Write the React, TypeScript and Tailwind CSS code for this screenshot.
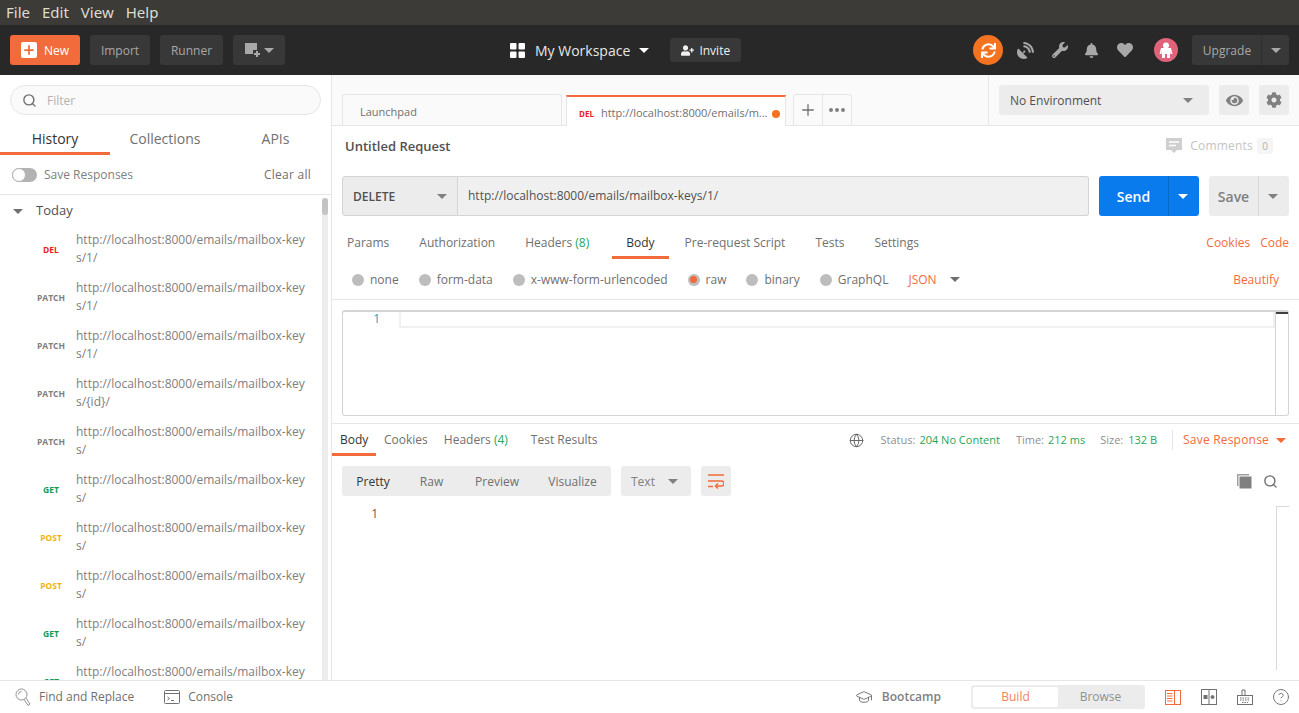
import { Search, Plus, Globe, HelpCircle, GraduationCap } from 'lucide-react';
import { FaBell, FaCog, FaEye, FaHeart, FaSatelliteDish, FaSync, FaUserPlus, FaWrench } from 'react-icons/fa';

const HISTORY = [
  { method: 'DEL', color: 'text-[#f02020]', url: 'http://localhost:8000/emails/mailbox-keys/1/' },
  { method: 'PATCH', color: 'text-[#808080]', url: 'http://localhost:8000/emails/mailbox-keys/1/' },
  { method: 'PATCH', color: 'text-[#808080]', url: 'http://localhost:8000/emails/mailbox-keys/1/' },
  { method: 'PATCH', color: 'text-[#808080]', url: 'http://localhost:8000/emails/mailbox-keys/{id}/' },
  { method: 'PATCH', color: 'text-[#808080]', url: 'http://localhost:8000/emails/mailbox-keys/' },
  { method: 'GET', color: 'text-[#0f9d58]', url: 'http://localhost:8000/emails/mailbox-keys/' },
  { method: 'POST', color: 'text-[#f5b014]', url: 'http://localhost:8000/emails/mailbox-keys/' },
  { method: 'POST', color: 'text-[#f5b014]', url: 'http://localhost:8000/emails/mailbox-keys/' },
  { method: 'GET', color: 'text-[#0f9d58]', url: 'http://localhost:8000/emails/mailbox-keys/' },
  { method: 'GET', color: 'text-[#0f9d58]', url: 'http://localhost:8000/emails/mailbox-keys/' },
];

function Caret({ className }: { className: string }) {
  return <span className={`inline-block w-0 h-0 border-x-[5px] border-x-transparent border-t-[5px] ${className}`} />;
}

function Radio({ label, on }: { label: string; on?: boolean }) {
  return (
    <div className="flex items-center gap-[6px]">
      <span className="w-3 h-3 rounded-full bg-[#bdbdbd] flex items-center justify-center">
        {on && <span className="w-[7px] h-[7px] rounded-full bg-[#f26b3a]" />}
      </span>
      <span className="text-xs text-[#6f6f6f]">{label}</span>
    </div>
  );
}

function TopBar() {
  return (
    <div className="h-[50px] bg-[#282828] flex items-center px-[10px] shrink-0">
      <div className="flex items-center gap-[10px] w-[450px]">
        <button className="w-[70px] h-[30px] rounded-[3px] bg-[#f26b3a] text-white text-xs flex items-center pl-[11px] gap-[7px]">
          <span className="w-4 h-4 bg-white rounded-[2px] flex items-center justify-center">
            <Plus size={14} strokeWidth={3} className="text-[#f26b3a]" />
          </span>
          <span className="pt-px">New</span>
        </button>
        <button className="w-[60px] h-[30px] pt-px rounded-[3px] bg-[#383838] text-[#a8a8a8] text-xs">Import</button>
        <button className="w-[63px] h-[30px] pt-px rounded-[3px] bg-[#383838] text-[#a8a8a8] text-xs">Runner</button>
        <button className="w-[52px] h-[30px] rounded-[3px] bg-[#383838] flex items-center justify-center gap-[3px]">
          <svg width="16" height="16" viewBox="0 0 16 16">
            <path d="M0 1h12v7H8v4H0z" fill="#a8a8a8" />
            <path d="M9 12h6M12 9v6" stroke="#a8a8a8" strokeWidth="2" />
          </svg>
          <Caret className="border-t-[#a8a8a8]" />
        </button>
      </div>
      <div className="flex items-center ml-[50px]">
        <svg width="15" height="15" viewBox="0 0 15 15" fill="#fff">
          <rect width="6.500" height="6.500" rx="1" />
          <rect x="8.500" width="6.500" height="6.500" rx="1" />
          <rect y="8.500" width="6.500" height="6.500" rx="1" />
          <rect x="8.500" y="8.500" width="6.500" height="6.500" rx="1" />
        </svg>
        <span className="text-sm text-[#e6e6e6] ml-[10px] pt-[2px]">My Workspace</span>
        <Caret className="border-t-white ml-[9px]" />
        <button className="ml-[21px] w-[71px] h-6 rounded-[3px] bg-[#383838] text-[#f0f0f0] text-xs flex items-center justify-center gap-[5px]">
          <FaUserPlus size={13} className="text-[#f0f0f0]" />
          <span className="pt-px">Invite</span>
        </button>
      </div>
      <div className="ml-auto flex items-center">
        <span className="w-[30px] h-[30px] rounded-full bg-[#f47321] flex items-center justify-center">
          <FaSync size={15} className="text-white" />
        </span>
        <FaSatelliteDish size={17} className="text-[#a8a8a8] ml-[14px]" />
        <FaWrench size={16} className="text-[#a8a8a8] ml-[18px]" />
        <FaBell size={15} className="text-[#a8a8a8] ml-[16px]" />
        <FaHeart size={16} className="text-[#a8a8a8] ml-[18px]" />
        <span className="w-6 h-6 rounded-full bg-[#e0637b] ml-[21px] flex items-center justify-center">
          <svg width="14" height="16" viewBox="0 0 14 16" fill="#fff">
            <circle cx="7" cy="3.500" r="3" />
            <path d="M2 6h10l1.500 6h-2L11 9v7H8v-4H6v4H3V9l-.5 3h-2z" />
          </svg>
        </span>
        <div className="ml-[14px] w-[97px] h-[30px] rounded-[3px] bg-[#383838] flex items-center">
          <span className="w-[70px] pl-px text-center text-xs text-[#a8a8a8] border-r border-[#303030] leading-[31px] h-[30px]">Upgrade</span>
          <Caret className="border-t-[#a8a8a8] ml-[9px]" />
        </div>
      </div>
    </div>
  );
}

function Sidebar() {
  return (
    <aside className="w-[332px] shrink-0 border-r border-[#e6e6e6] flex flex-col min-h-0">
      <div className="px-[10px] pt-[10px]">
        <div className="h-[30px] rounded-full border border-[#e6e6e6] bg-[#fafafa] flex items-center pl-[11px] gap-[10px] w-[311px]">
          <Search size={15} strokeWidth={2.25} className="text-[#707070]" />
          <span className="text-xs text-[#b3b3b3] pt-[2px]">Filter</span>
        </div>
      </div>
      <div className="flex mt-[10px] h-[30px] w-[330px]">
        <div className="w-[110px] text-center text-sm text-[#333] border-b-[3px] border-[#f26b3a] leading-[28px]">History</div>
        <div className="w-[110px] text-center text-sm text-[#707070] leading-[28px]">Collections</div>
        <div className="w-[110px] pl-px text-center text-sm text-[#707070] leading-[28px]">APIs</div>
      </div>
      <div className="h-[40px] flex items-center pl-3 pr-5 border-b border-[#e6e6e6] shrink-0">
        <span className="w-[25px] h-[14px] rounded-full bg-[#b3b3b3] relative">
          <span className="absolute left-0 top-0 w-[14px] h-[14px] rounded-full bg-white border border-[#b3b3b3]" />
        </span>
        <span className="text-xs text-[#808080] ml-[7px]">Save Responses</span>
        <span className="text-xs text-[#707070] ml-auto tracking-[0.25px]">Clear all</span>
      </div>
      <div className="flex-1 flex min-h-0 overflow-hidden">
        <div className="w-[322px] shrink-0">
          <div className="flex items-center h-[30px] pt-[2px] pl-[13px]">
            <Caret className="border-t-[#707070]" />
            <span className="text-[13px] text-[#505050] ml-[13px]">Today</span>
          </div>
          {HISTORY.map((item, i) => (
            <div key={i} className="h-[48px] flex items-center">
              <span className={`ml-[31px] w-[40px] pt-[2px] text-center text-[8.5px] font-bold shrink-0 ${item.color}`}>{item.method}</span>
              <span className="ml-[5px] w-[232px] text-xs leading-[18px] text-[#808080] break-all">{item.url}</span>
            </div>
          ))}
        </div>
        <div className="w-[6px] bg-[#ececec] rounded-full mt-[3px] h-full">
          <div className="h-[17px] rounded-full bg-[#c4c4c4]" />
        </div>
      </div>
    </aside>
  );
}

function TabStrip() {
  return (
    <div className="h-[51px] bg-[#fafafa] border-b border-[#e6e6e6] flex shrink-0">
      <div className="flex items-end pl-[10px] flex-1">
        <div className="w-[220px] h-[31px] pt-1 border border-b-0 border-[#e6e6e6] rounded-t-[3px] flex items-center pl-[17px] text-[11px] text-[#707070]">
          Launchpad
        </div>
        <div className="w-[220px] h-[31px] pt-1 ml-[4px] bg-white border-x border-[#e6e6e6] border-t-[2px] border-t-[#f26b3a] flex items-center pl-[12px] -mb-px">
          <span className="text-[8px] font-bold text-[#f02020]">DEL</span>
          <span className="text-[11px] text-[#707070] ml-[7px]">http://localhost:8000/emails/m...</span>
          <span className="w-2 h-2 rounded-full bg-[#f47321] ml-[4px]" />
        </div>
        <div className="flex h-[31px] ml-[7px] border border-b-0 border-[#e6e6e6] rounded-t-[3px]">
          <span className="w-[29px] flex items-center justify-center border-r border-[#e6e6e6]">
            <Plus size={18} strokeWidth={1.75} className="text-[#707070]" />
          </span>
          <span className="w-[28px] flex items-center justify-center gap-[2px]">
            <span className="w-1 h-1 rounded-full bg-[#808080]" />
            <span className="w-1 h-1 rounded-full bg-[#808080]" />
            <span className="w-1 h-1 rounded-full bg-[#808080]" />
          </span>
        </div>
      </div>
      <div className="w-[311px] border-l border-[#e6e6e6] flex items-start pt-[10px] pl-[10px] gap-[10px]">
        <div className="w-[210px] h-[30px] rounded-[3px] bg-[#ececec] flex items-center justify-between pl-[11px] pr-4 text-xs text-[#505050]">
          <span className="pt-px">No Environment</span>
          <Caret className="border-t-[#808080]" />
        </div>
        <span className="w-[30px] h-[30px] rounded-[3px] bg-[#ececec] flex items-center justify-center">
          <FaEye size={17} className="text-[#808080]" />
        </span>
        <span className="w-[30px] h-[30px] rounded-[3px] bg-[#ececec] flex items-center justify-center">
          <FaCog size={16} className="text-[#808080]" />
        </span>
      </div>
    </div>
  );
}

function RequestPane() {
  return (
    <div className="h-[298px] shrink-0 border-b border-[#e6e6e6] flex flex-col">
      <div className="h-[40px] flex items-center pl-[13px] pr-[26px] shrink-0">
        <span className="text-[13px] font-semibold text-[#505050] pt-[2px]">Untitled Request</span>
        <div className="ml-auto flex items-center">
          <svg width="16" height="16" viewBox="0 0 16 16">
            <path d="M0 0h16v12h-5l-3 3-3-3H0z" fill="#cfcfcf" />
            <path d="M3 4h10M3 7.500h7" stroke="#fff" strokeWidth="1.500" />
          </svg>
          <span className="text-xs tracking-[0.2px] text-[#c4c4c4] ml-2">Comments</span>
          <span className="w-4 h-4 ml-1 rounded-[2px] bg-[#f5f5f5] text-[10px] text-[#b3b3b3] flex items-center justify-center">0</span>
        </div>
      </div>
      <div className="flex px-[10px] mt-[10px] shrink-0">
        <div className="w-[116px] h-[40px] bg-[#ececec] border border-[#d4d4d4] rounded-l-[3px] flex items-center justify-between pl-[10px] pr-[10px] text-xs font-semibold text-[#505050]">
          <span className="pt-px">DELETE</span>
          <Caret className="border-t-[#808080]" />
        </div>
        <div className="w-[631px] h-[40px] bg-[#f0f0f0] border border-l-0 border-[#d4d4d4] rounded-r-[3px] flex items-center pl-[10px] text-xs text-[#505050]">
          http://localhost:8000/emails/mailbox-keys/1/
        </div>
        <div className="ml-[10px] w-[100px] h-[40px] rounded-[3px] bg-[#097bed] flex items-center text-white">
          <span className="w-[70px] h-[40px] text-center text-sm font-semibold border-r border-[#0868c8] leading-[42px]">Send</span>
          <Caret className="border-t-white ml-[9px]" />
        </div>
        <div className="ml-[10px] w-[80px] h-[40px] rounded-[3px] bg-[#ececec] flex items-center">
          <span className="w-[50px] h-[40px] text-center text-sm font-semibold text-[#808080] border-r border-[#d9d9d9] leading-[42px]">Save</span>
          <Caret className="border-t-[#808080] ml-[9px]" />
        </div>
      </div>
      <div className="flex items-start h-[46px] pl-[15px] pr-[10px] text-xs text-[#707070] shrink-0">
        <div className="flex gap-[30px]">
          <span className="pt-[19px]">Params</span>
          <span className="pt-[19px]">Authorization</span>
          <span className="pt-[19px] mr-[7px]">Headers <span className="text-[#26a65b]">(8)</span></span>
          <span className="h-[43px] pt-[19px] text-[#333] border-b-[3px] border-[#f26b3a] -mx-[14px] px-[14px]">Body</span>
          <span className="pt-[19px]">Pre-request Script</span>
          <span className="pt-[19px]">Tests</span>
          <span className="pt-[19px]">Settings</span>
        </div>
        <div className="ml-auto flex gap-[10px] pt-[19px] text-[#f26b3a]">
          <span>Cookies</span>
          <span>Code</span>
        </div>
      </div>
      <div className="flex items-center pl-[20px] pr-[20px] pb-[2px] h-[38px] border-b border-[#e6e6e6] gap-5 shrink-0">
        <Radio label="none" />
        <Radio label="form-data" />
        <Radio label="x-www-form-urlencoded" />
        <Radio label="raw" on />
        <Radio label="binary" />
        <Radio label="GraphQL" />
        <span className="text-xs text-[#f26b3a]">JSON</span>
        <Caret className="border-t-[#707070] -ml-[7px]" />
        <span className="ml-auto text-xs text-[#f26b3a]">Beautify</span>
      </div>
      <div className="mx-[10px] mt-[10px] h-[106px] border border-[#d4d4d4] border-t-2 rounded-[3px] flex shrink-0">
        <span className="w-[37px] text-right text-xs font-medium text-[#0ea5c8] leading-[14px]">1</span>
        <div className="flex-1 ml-[19px] h-[16px] border-2 border-t-0 border-[#f0f0f0]" />
        <div className="w-[13px] border-l border-[#d4d4d4]">
          <div className="h-[2px] bg-[#404040]" />
        </div>
      </div>
    </div>
  );
}

function ResponsePane() {
  return (
    <div className="flex-1 flex flex-col min-h-0">
      <div className="h-[32px] flex items-center pr-[13px] shrink-0">
        <div className="flex text-xs text-[#707070] h-[32px]">
          <span className="w-[44px] pl-2 leading-[32px] text-[#333] border-b-[3px] border-[#f26b3a]">Body</span>
          <span className="ml-2 leading-[32px]">Cookies</span>
          <span className="ml-4 leading-[32px]">Headers <span className="text-[#26a65b]">(4)</span></span>
          <span className="ml-[23px] leading-[32px]">Test Results</span>
        </div>
        <div className="ml-auto flex items-center text-[11px] text-[#909090]">
          <Globe size={15} strokeWidth={1.5} className="text-[#606060] mr-[17px]" />
          Status:
          <span className="text-[#26a65b] ml-1">204 No Content</span>
          <span className="ml-[16px]">Time:</span>
          <span className="text-[#26a65b] ml-1">212 ms</span>
          <span className="ml-[15px]">Size:</span>
          <span className="text-[#26a65b] ml-[5px]">132 B</span>
          <span className="w-px h-5 bg-[#e6e6e6] ml-[15px]" />
          <span className="text-xs tracking-[0.2px] text-[#f26b3a] ml-[10px]">Save Response</span>
          <Caret className="border-t-[#f26b3a] ml-[7px]" />
        </div>
      </div>
      <div className="flex items-center pl-[10px] pr-[21px] mt-[10px] shrink-0">
        <div className="w-[269px] h-[30px] pt-[2px] rounded-[3px] bg-[#ececec] flex items-center text-xs text-[#707070]">
          <span className="w-[62px] text-center text-[#333]">Pretty</span>
          <span className="w-[55px] text-center">Raw</span>
          <span className="w-[76px] text-center">Preview</span>
          <span className="w-[75px] text-center">Visualize</span>
        </div>
        <div className="ml-[10px] w-[70px] h-[30px] rounded-[3px] bg-[#ececec] flex items-center justify-between pl-[10px] pr-[13px] text-xs text-[#808080]">
          <span className="pt-[2px]">Text</span>
          <Caret className="border-t-[#808080]" />
        </div>
        <span className="ml-[10px] w-[30px] h-[30px] rounded-[3px] bg-[#ececec] flex items-center justify-center">
          <svg width="16" height="15" viewBox="0 0 16 15" fill="none" stroke="#f26b3a" strokeWidth="1.500">
            <path d="M0 1h16M0 7h13.500a2.500 2.500 0 0 1 0 5H8" />
            <path d="M10 9.500 7.500 12l2.500 2.500M0 12.500h5" />
          </svg>
        </span>
        <div className="ml-auto flex items-center gap-[11px]">
          <svg width="15" height="15" viewBox="0 0 15 15">
            <path d="M.75 12V.75H12" fill="none" stroke="#a0a0a0" strokeWidth="1.500" />
            <rect x="2.500" y="2.500" width="12" height="12" fill="#808080" />
          </svg>
          <Search size={15} strokeWidth={2.25} className="text-[#707070]" />
        </div>
      </div>
      <div className="flex flex-1 mt-[10px] min-h-0 pr-[10px]">
        <span className="w-[46px] text-right text-xs text-[#606060] leading-[16px]">1</span>
        <div className="ml-auto w-[13px] h-[164px] border-l border-t border-[#d9d9d9]" />
      </div>
    </div>
  );
}

function BottomBar() {
  return (
    <div className="h-[33px] border-t border-[#e6e6e6] bg-white flex items-center shrink-0 pl-[15px] pr-[9px] text-xs text-[#707070]">
      <svg width="16" height="19" viewBox="0 0 16 19" fill="none" stroke="#909090">
        <circle cx="6.500" cy="6.500" r="5.500" />
        <path d="M3.500 6.500a3 3 0 0 1 3-3" />
        <path d="M9 11.500l4 6 2-1.500-4-6" />
      </svg>
      <span className="ml-2">Find and Replace</span>
      <svg width="16" height="14" viewBox="0 0 16 14" fill="none" stroke="#707070" className="ml-[30px]">
        <rect x=".5" y=".5" width="15" height="13" rx="1" />
        <path d="M1 3.500h14M3.500 7l2 1.500-2 1.500M7 10.500h3" />
      </svg>
      <span className="ml-2">Console</span>
      <div className="ml-auto flex items-center">
        <GraduationCap size={18} strokeWidth={1.25} className="text-[#707070]" />
        <span className="ml-[9px] font-semibold text-[#808080]">Bootcamp</span>
        <div className="ml-[30px] w-[174px] h-6 rounded-[3px] bg-[#ececec] flex p-[2px]">
          <span className="w-[85px] rounded-[2px] bg-white text-[#f2835a] flex items-center justify-center">Build</span>
          <span className="flex-1 text-[#909090] flex items-center justify-center">Browse</span>
        </div>
        <svg width="16" height="15" viewBox="0 0 16 15" fill="none" stroke="#f26b3a" className="ml-5">
          <rect x=".5" y=".5" width="15" height="14" />
          <path d="M9.500 0v15M2 3.500h5.500M2 6h5.500M2 8.500h5.500M2 11h5.500" />
        </svg>
        <svg width="16" height="16" viewBox="0 0 16 16" fill="none" stroke="#707070" className="ml-5">
          <rect x=".5" y=".5" width="15" height="15" />
          <path d="M8 0v16" />
          <rect x="3" y="6.500" width="3" height="3" fill="#707070" />
          <circle cx="11.500" cy="8" r="1.500" fill="#707070" />
        </svg>
        <svg width="16" height="16" viewBox="0 0 16 16" fill="none" stroke="#707070" className="ml-5">
          <rect x=".5" y="6.500" width="15" height="9" />
          <path d="M5 6.500V1h3v5.500" />
          <path d="M3 9h10M3 11h10M5 13.500h6" strokeDasharray="1.500 1" />
        </svg>
        <HelpCircle size={18} strokeWidth={1.25} className="text-[#707070] ml-[19px]" />
      </div>
    </div>
  );
}

export default function App() {
  return (
    <div className="h-[713px] w-[1299px] flex flex-col overflow-hidden bg-white font-['Open_Sans',sans-serif]">
      <div className="h-[25px] bg-[#3c3b37] flex items-center pl-[6px] gap-[12px] text-[15px] text-[#dfdbd2] shrink-0 font-['Noto_Sans',sans-serif]">
        <span>File</span>
        <span>Edit</span>
        <span>View</span>
        <span>Help</span>
      </div>
      <TopBar />
      <div className="flex flex-1 min-h-0">
        <Sidebar />
        <main className="flex-1 flex flex-col min-w-0">
          <TabStrip />
          <RequestPane />
          <ResponsePane />
        </main>
      </div>
      <BottomBar />
    </div>
  );
}
